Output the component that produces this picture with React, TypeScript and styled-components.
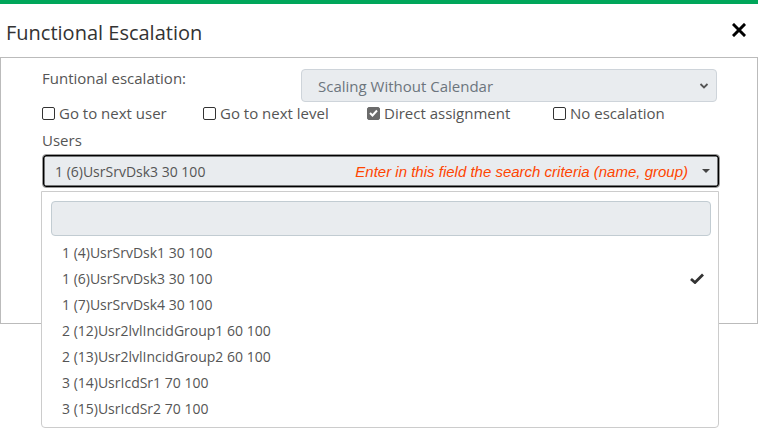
import styled, { createGlobalStyle } from "styled-components";

const GlobalStyle = createGlobalStyle`
    body {
        margin: 0;
        background: #fff;
        font-family: "Open Sans", "Noto Sans", sans-serif;
        color: #555;
    }
`;

const users = [
    "1 (4)UsrSrvDsk1 30 100",
    "1 (6)UsrSrvDsk3 30 100",
    "1 (7)UsrSrvDsk4 30 100",
    "2 (12)Usr2lvlIncidGroup1 60 100",
    "2 (13)Usr2lvlIncidGroup2 60 100",
    "3 (14)UsrIcdSr1 70 100",
    "3 (15)UsrIcdSr2 70 100",
];
const selected = "1 (6)UsrSrvDsk3 30 100";

const options = [
    { label: "Go to next user", checked: false },
    { label: "Go to next level", checked: false },
    { label: "Direct assignment", checked: true },
    { label: "No escalation", checked: false },
];

const App = () => {
    return (
        <Modal>
            <GlobalStyle />
            <Header>
                <Title>Functional Escalation</Title>
                <CloseButton aria-label="close">
                    <svg width="14" height="14" viewBox="0 0 14 14">
                        <path d="M2 2 L12 12 M12 2 L2 12" stroke="#000" strokeWidth="3" strokeLinecap="square" />
                    </svg>
                </CloseButton>
            </Header>
            <Panel>
                <FieldRow>
                    <FieldLabel>Funtional escalation:</FieldLabel>
                    <SelectBox>
                        <span>Scaling Without Calendar</span>
                        <svg width="10" height="6" viewBox="0 0 10 6">
                            <path d="M1.5 1 L5 4.5 L8.5 1" fill="none" stroke="#555" strokeWidth="1.8" />
                        </svg>
                    </SelectBox>
                </FieldRow>
                <CheckRow>
                    {options.map((o) => (
                        <CheckItem key={o.label}>
                            <CheckBox $checked={o.checked}>
                                {o.checked && (
                                    <svg width="9" height="8" viewBox="0 0 9 8">
                                        <path d="M1 4 L3.5 6.5 L8 1.5" fill="none" stroke="#fff" strokeWidth="2" />
                                    </svg>
                                )}
                            </CheckBox>
                            {o.label}
                        </CheckItem>
                    ))}
                </CheckRow>
                <UsersLabel>Users</UsersLabel>
                <Combo>
                    <ComboValue>{selected}</ComboValue>
                    <Hint>Enter in this field the search criteria (name, group)</Hint>
                    <Caret />
                    <Dropdown>
                        <SearchInput />
                        {users.map((u) => (
                            <Option key={u}>
                                {u}
                                {u === selected && (
                                    <svg width="14" height="11" viewBox="0 0 14 11">
                                        <path d="M1 6 L5 9.5 L13 1.5" fill="none" stroke="#333" strokeWidth="2.8" />
                                    </svg>
                                )}
                            </Option>
                        ))}
                    </Dropdown>
                </Combo>
            </Panel>
        </Modal>
    );
};

const Modal = styled.div`
    width: 758px;
    height: 428px;
    border-top: 4px solid #00a65a;
    box-sizing: border-box;
    overflow: hidden;
`;

const Header = styled.div`
    display: flex;
    align-items: center;
    justify-content: space-between;
    height: 53px;
    padding: 0 12px 0 6px;
`;

const Title = styled.h4`
    margin: 0;
    font-size: 20px;
    font-weight: 500;
    color: #333;
    padding-top: 4px;
`;

const CloseButton = styled.button`
    border: 0;
    background: none;
    padding: 0;
    display: flex;
    margin-top: -2px;
`;

const Panel = styled.div`
    box-sizing: border-box;
    height: 267px;
    width: 758px;
    border: 1px solid #bbb;
    padding: 11px 0 0 41px;
`;

const FieldRow = styled.div`
    display: flex;
    align-items: flex-start;
`;

const FieldLabel = styled.label`
    width: 259px;
    font-size: 15px;
    line-height: 19px;
`;

const SelectBox = styled.div`
    box-sizing: border-box;
    width: 416px;
    height: 33px;
    display: flex;
    align-items: center;
    justify-content: space-between;
    padding: 0 7px 0 16px;
    background: #e9ecef;
    border: 1px solid #ced4da;
    border-radius: 4px;
    color: #6c757d;
    font-size: 15px;
`;

const CheckRow = styled.div`
    display: grid;
    grid-template-columns: 161px 164px 186px auto;
    height: 22px;
    align-items: center;
`;

const CheckItem = styled.label`
    display: flex;
    align-items: center;
    gap: 4px;
    font-size: 15px;
    color: #555;
`;

const CheckBox = styled.span<{ $checked: boolean }>`
    box-sizing: border-box;
    width: 13px;
    height: 13px;
    border-radius: 2px;
    border: 1px solid ${(p) => (p.$checked ? "#6b6b6b" : "#333")};
    background: ${(p) => (p.$checked ? "#6b6b6b" : "#fff")};
    display: flex;
    align-items: center;
    justify-content: center;
`;

const UsersLabel = styled.div`
    font-size: 15px;
    line-height: 22px;
    margin-top: 5px;
`;

const Combo = styled.div`
    position: relative;
    box-sizing: border-box;
    width: 678px;
    height: 34px;
    margin-top: 3px;
    display: flex;
    align-items: center;
    padding: 0 9px 0 12px;
    background: #e9ecef;
    border: 1px solid #999;
    box-shadow: inset 0 0 0 1.5px #000;
    border-radius: 4px;
`;

const ComboValue = styled.span`
    flex: 1;
    font-size: 14px;
    color: #555;
`;

const Hint = styled.span`
    font-family: "Liberation Sans", Arial, sans-serif;
    font-style: italic;
    font-size: 15px;
    color: #ff4500;
    margin-right: 14px;
`;

const Caret = styled.span`
    width: 0;
    height: 0;
    border-left: 4px solid transparent;
    border-right: 4px solid transparent;
    border-top: 4px solid #444;
`;

const Dropdown = styled.div`
    position: absolute;
    top: 36px;
    left: -2px;
    right: 0;
    box-sizing: border-box;
    background: #fff;
    border: 1px solid #ccc;
    border-radius: 0 0 4px 4px;
    padding: 9px 7px 6px 9px;
`;

const SearchInput = styled.div`
    box-sizing: border-box;
    height: 35px;
    background: #e9ecef;
    border: 1px solid #c2ccd2;
    border-radius: 4px;
    margin-bottom: 3px;
`;

const Option = styled.div`
    display: flex;
    align-items: center;
    justify-content: space-between;
    height: 26px;
    padding: 0 7px 0 11px;
    font-size: 14px;
    color: #555;
`;

export default App;
